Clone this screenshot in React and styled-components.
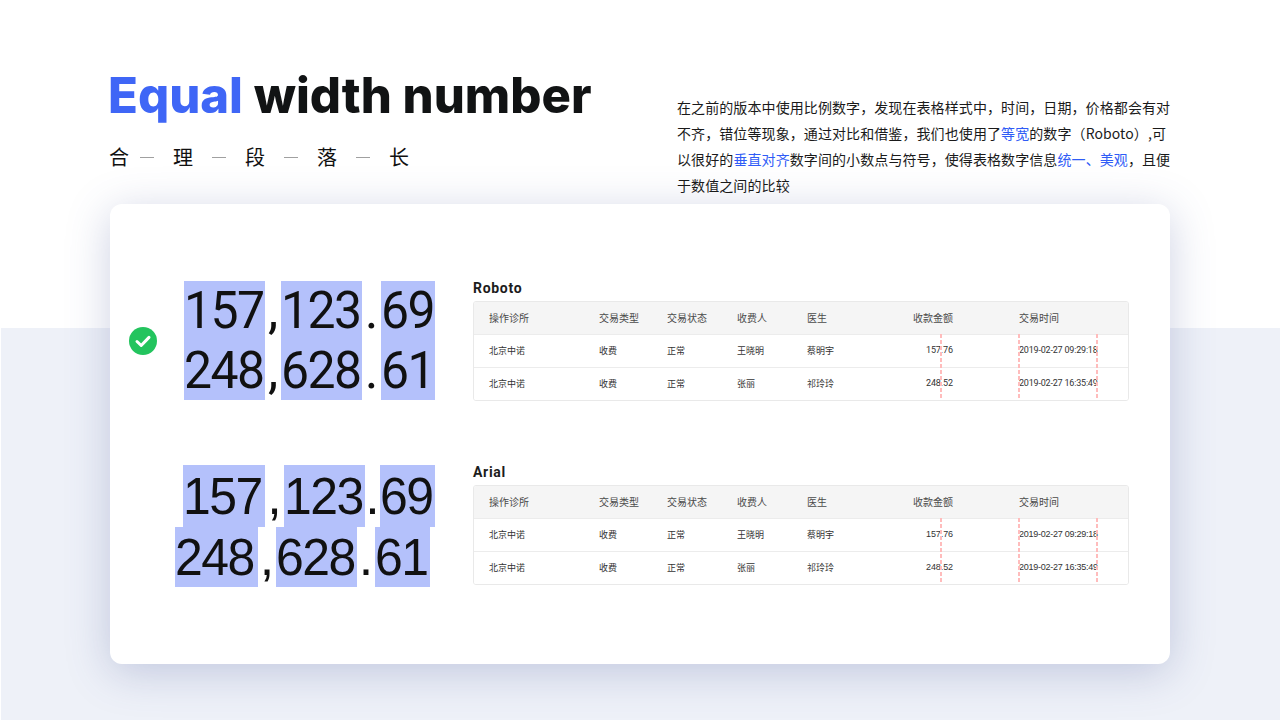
import React from "react";
import styled, { createGlobalStyle } from "styled-components";

const Global = createGlobalStyle`
  html, body { margin: 0; padding: 0; background: #fff; }
  body { font-family: "Noto Sans CJK SC", "Noto Sans", sans-serif; }
`;

const Page = styled.div`
  width: 1280px;
  height: 720px;
  box-sizing: border-box;
  overflow: hidden;
  border-left: 1px solid #fff;
  background: linear-gradient(to bottom, #fff 0, #fff 328px, #eef1f8 328px, #eef1f8 100%);
`;

const Hero = styled.header`
  height: 204px;
  box-sizing: border-box;
  display: flex;
  justify-content: space-between;
  padding: 66px 107px 0 107px;
`;

const HeroLeft = styled.div`
  display: flex;
  flex-direction: column;
`;

const Title = styled.h1`
  margin: 0;
  font-family: Inter, "Liberation Sans", sans-serif;
  font-size: 49px;
  font-weight: 800;
  line-height: 60px;
  letter-spacing: 0;
  color: #111314;
  white-space: nowrap;
`;

const Accent = styled.span`
  color: #3f66f6;
`;

const Steps = styled.div`
  display: flex;
  align-items: center;
  margin: 16px 0 0 1px;
  height: 30px;
  font-size: 20px;
  line-height: 30px;
  color: #111;
`;

const StepDash = styled.i`
  display: block;
  width: 14px;
  height: 1px;
  background: #a0a0a0;
  margin: 0 19px;
  margin-left: ${(p) => (p.$tight ? "11px" : "19px")};
`;

const Intro = styled.p`
  width: 496px;
  margin: 28px 0 0;
  font-size: 14px;
  line-height: 26px;
  letter-spacing: 0.09px;
  color: #1a1a1a;
`;

const Mark = styled.span`
  color: #2f5cf6;
`;

const Card = styled.main`
  width: 1060px;
  height: 460px;
  box-sizing: border-box;
  margin-left: 109px;
  padding: 75px 41px 0 19px;
  background: #fff;
  border-radius: 12px;
  box-shadow: 0 8px 44px rgba(70, 85, 150, 0.27);
  display: flex;
  flex-direction: column;
  gap: 62px;
`;

const Row = styled.section`
  display: flex;
  align-items: flex-start;
`;

const CheckSlot = styled.div`
  width: 28px;
  height: 28px;
  margin-top: 48px;
  flex: none;
`;

const NumberCol = styled.div`
  width: 278px;
  flex: none;
  margin-right: 38px;
  padding-top: ${(p) => p.$top}px;
  color: #111;
  font-family: ${(p) => p.$font};
  font-size: ${(p) => p.$size}px;
`;

const NumberLine = styled.div`
  display: flex;
  justify-content: flex-end;
  height: ${(p) => p.$h}px;
  line-height: ${(p) => p.$h}px;
  padding-right: ${(p) => p.$inset || 0}px;
`;

const Digits = styled.span`
  display: block;
  width: ${(p) => p.$w}px;
  background: #b4c1fb;
  white-space: nowrap;
`;

const Squeezed = styled.span`
  display: inline-block;
  letter-spacing: -1.6px;
  transform: scaleX(0.96);
  transform-origin: left center;
`;

const Sep = styled.span`
  display: flex;
  justify-content: center;
  width: ${(p) => p.$w}px;
`;

const TableCol = styled.div`
  flex: 1;
  min-width: 0;
`;

const TableName = styled.h3`
  margin: 0 0 4px;
  height: 18px;
  font-family: Roboto, sans-serif;
  font-size: 14px;
  font-weight: 700;
  line-height: 18px;
  letter-spacing: 0.7px;
  color: #1c1c1c;
`;

const Table = styled.div`
  position: relative;
  overflow: hidden;
  border: 1px solid #e9e9e9;
  border-radius: 3px;
`;

const TableRow = styled.div`
  display: grid;
  grid-template-columns: 110px 68px 70px 70px 106px 40px 1fr;
  align-items: center;
  box-sizing: border-box;
  height: 32px;
  padding: 0 0 2px 15px;
  background: ${(p) => (p.$head ? "#f5f5f5" : "#fff")};
  font-size: ${(p) => (p.$head ? 10 : 9)}px;
  color: ${(p) => (p.$head ? "#4a4a4a" : "#333")};
  & + & {
    height: 33px;
    border-top: 1px solid #ececec;
  }
`;

const AmountCell = styled.span`
  justify-self: end;
  white-space: nowrap;
  font-family: ${(p) => p.$font || "inherit"};
  letter-spacing: ${(p) => (p.$font ? "-0.1px" : "0")};
`;

const TimeCell = styled.span`
  padding-left: 66px;
  white-space: nowrap;
  font-family: ${(p) => p.$font || "inherit"};
  letter-spacing: ${(p) => p.$ls || "0"};
`;

const Guide = styled.i`
  position: absolute;
  top: 32px;
  bottom: 0;
  left: ${(p) => p.$x}px;
  width: 2px;
  background: repeating-linear-gradient(to bottom, #ffbcbc 0, #ffbcbc 4px, transparent 4px, transparent 6px);
`;

const CheckIcon = () => (
  <svg width="28" height="28" viewBox="0 0 28 28">
    <circle cx="14" cy="14" r="14" fill="#23c45e" />
    <path d="M8 14.5l4.2 4L20 10.4" fill="none" stroke="#fff" strokeWidth="3" strokeLinecap="round" strokeLinejoin="round" />
  </svg>
);

const rows = [
  ["北京中诺", "收费", "正常", "王晓明", "蔡明宇", "157.76", "2019-02-27 09:29:18"],
  ["北京中诺", "收费", "正常", "张丽", "祁玲玲", "248.52", "2019-02-27 16:35:49"],
];

const DataTable = ({ font, timeLs }) => (
  <Table>
    <TableRow $head>
      <span>操作诊所</span>
      <span>交易类型</span>
      <span>交易状态</span>
      <span>收费人</span>
      <span>医生</span>
      <AmountCell>收款金额</AmountCell>
      <TimeCell>交易时间</TimeCell>
    </TableRow>
    {rows.map((r) => (
      <TableRow key={r[6]}>
        <span>{r[0]}</span>
        <span>{r[1]}</span>
        <span>{r[2]}</span>
        <span>{r[3]}</span>
        <span>{r[4]}</span>
        <AmountCell $font={font}>{r[5]}</AmountCell>
        <TimeCell $font={font} $ls={timeLs}>{r[6]}</TimeCell>
      </TableRow>
    ))}
    {[466, 544, 622].map((x) => (
      <Guide key={x} $x={x} />
    ))}
  </Table>
);

const NumberRow = ({ h, inset, w, parts }) => (
  <NumberLine $h={h} $inset={inset}>
    <Digits $w={w[0]}><Squeezed>{parts[0]}</Squeezed></Digits>
    <Sep $w={w[1]}>,</Sep>
    <Digits $w={w[2]}><Squeezed>{parts[1]}</Squeezed></Digits>
    <Sep $w={w[3]}>.</Sep>
    <Digits $w={w[4]}><Squeezed>{parts[2]}</Squeezed></Digits>
  </NumberLine>
);

export default function App() {
  return (
    <Page>
      <Global />
      <Hero>
        <HeroLeft>
          <Title>
            <Accent>Equal</Accent> width number
          </Title>
          <Steps>
            合<StepDash $tight />理<StepDash />段<StepDash />落<StepDash />长
          </Steps>
        </HeroLeft>
        <Intro>
          在之前的版本中使用比例数字，发现在表格样式中，时间，日期，价格都会有对不齐，错位等现象，通过对比和借鉴，我们也使用了
          <Mark>等宽</Mark>的数字（Roboto）,可以很好的<Mark>垂直对齐</Mark>数字间的小数点与符号，使得表格数字信息
          <Mark>统一、美观</Mark>，且便于数值之间的比较
        </Intro>
      </Hero>
      <Card>
        <Row>
          <CheckSlot>
            <CheckIcon />
          </CheckSlot>
          <NumberCol $font="Roboto, sans-serif" $size={52} $top={2}>
            <NumberRow h={60} w={[81, 16, 81, 19, 54]} parts={["157", "123", "69"]} />
            <NumberRow h={59} w={[81, 16, 81, 19, 54]} parts={["248", "628", "61"]} />
          </NumberCol>
          <TableCol>
            <TableName>Roboto</TableName>
            <DataTable font="Roboto, sans-serif" timeLs="-0.2px" />
          </TableCol>
        </Row>
        <Row>
          <CheckSlot />
          <NumberCol $font={`"Liberation Sans", Arial, sans-serif`} $size={52} $top={2}>
            <NumberRow h={62} w={[82, 19, 81, 15, 55]} parts={["157", "123", "69"]} />
            <NumberRow h={60} inset={5} w={[83, 18, 81, 18, 55]} parts={["248", "628", "61"]} />
          </NumberCol>
          <TableCol>
            <TableName>Arial</TableName>
            <DataTable font={`"Liberation Sans", Arial, sans-serif`} timeLs="-0.25px" />
          </TableCol>
        </Row>
      </Card>
    </Page>
  );
}
